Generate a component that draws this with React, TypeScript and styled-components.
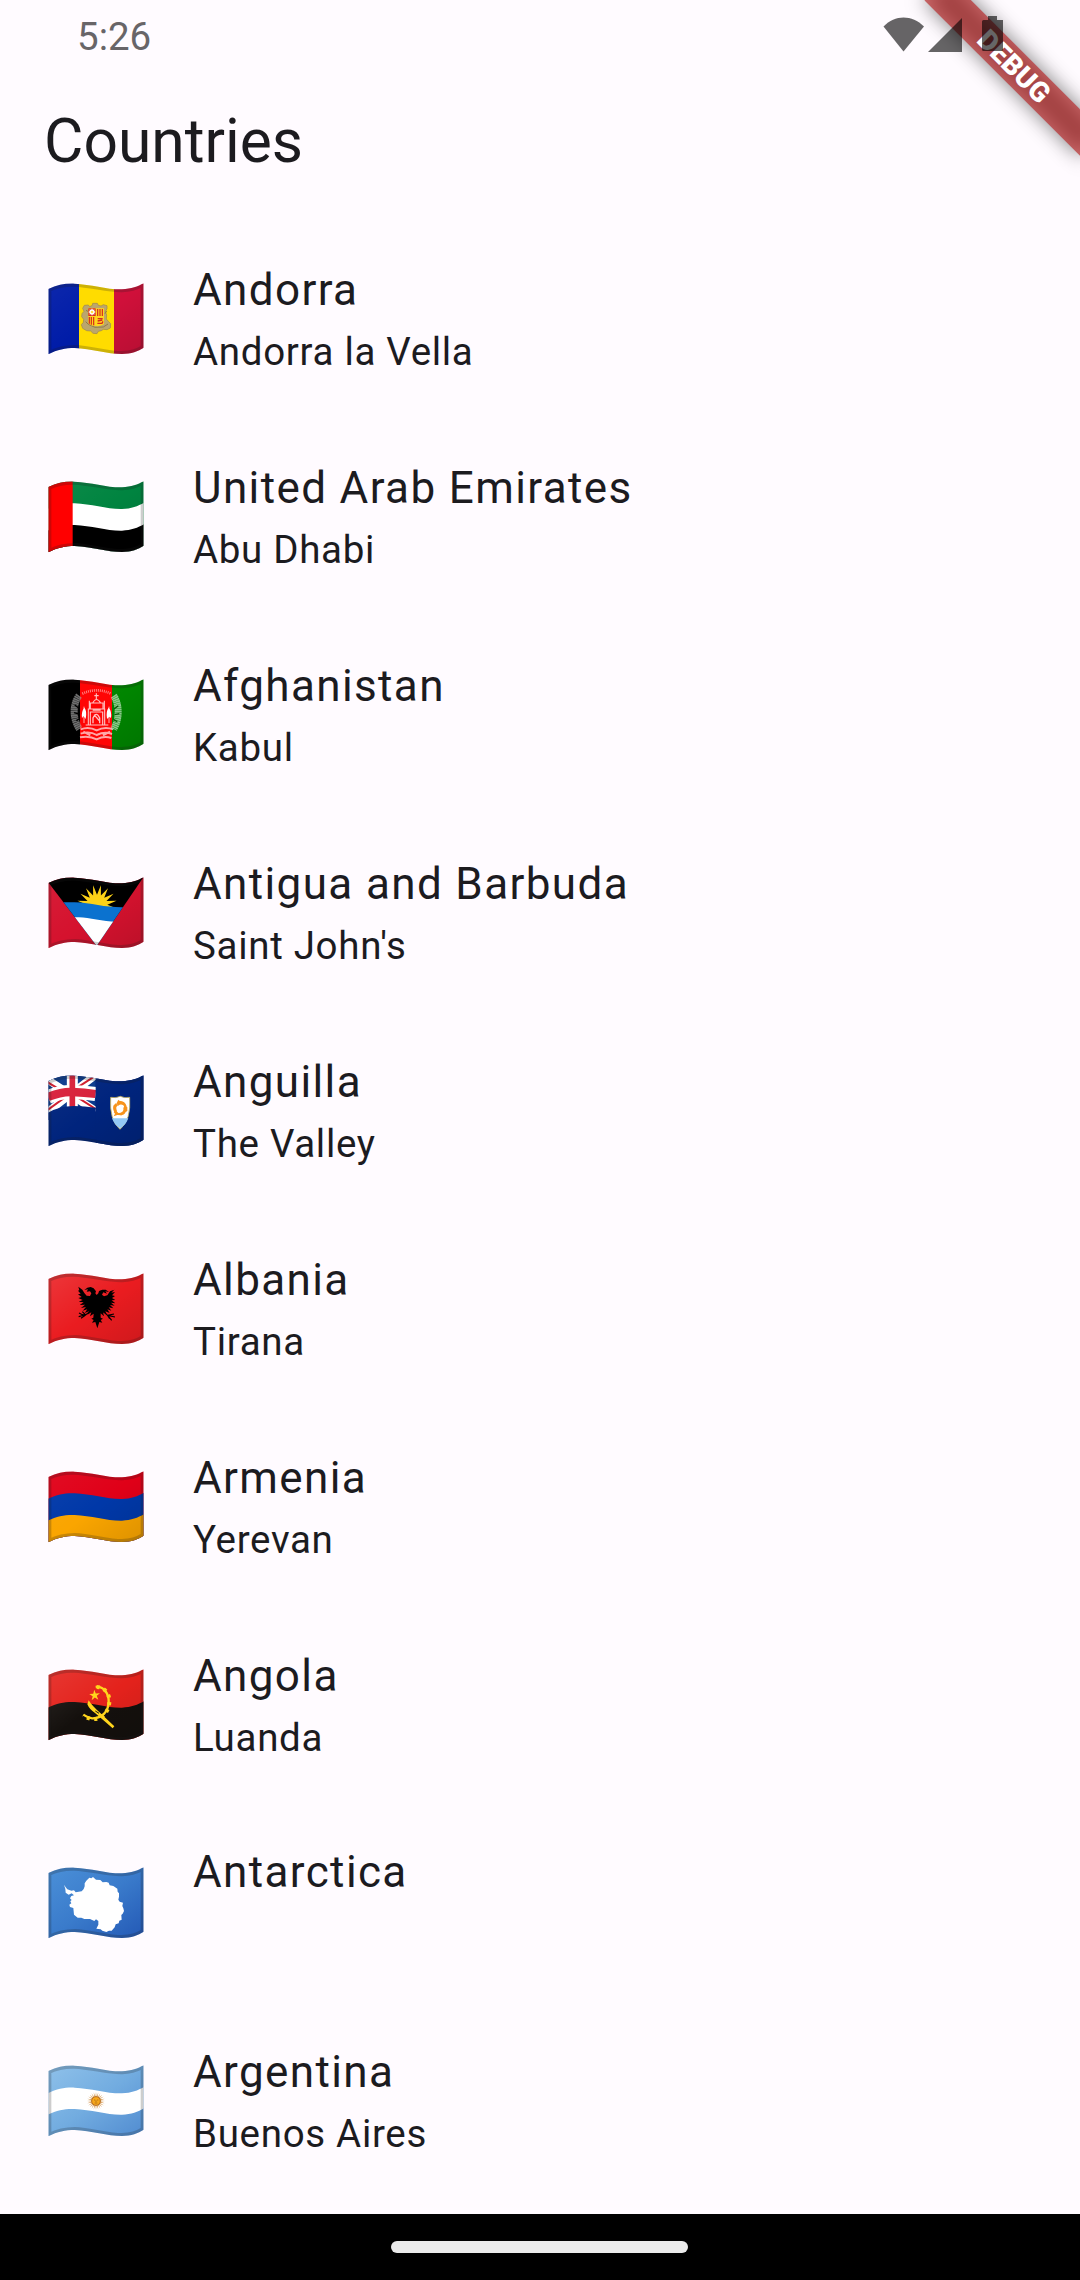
import React, { useId } from "react";
import styled, { createGlobalStyle } from "styled-components";

const GlobalStyle = createGlobalStyle`
  html, body { margin: 0; padding: 0; background: #fffbff; }
  * { box-sizing: border-box; }
`;

const Screen = styled.div`
  position: relative;
  display: flex;
  flex-direction: column;
  width: 1080px;
  height: 2280px;
  overflow: hidden;
  background: #fffbff;
  color: #1c1b1f;
  font-family: Roboto, "Noto Sans", sans-serif;
`;

const StatusBar = styled.header`
  position: relative;
  z-index: 2;
  display: flex;
  justify-content: space-between;
  align-items: flex-start;
  height: 66px;
  padding: 14px 75px 0 77px;
`;

const Clock = styled.time`
  font-size: 38.5px;
  line-height: 46px;
  color: #686568;
`;

const StatusIcons = styled.div`
  display: flex;
  svg { display: block; }
`;

const AppBar = styled.div`
  display: flex;
  align-items: center;
  height: 154px;
  padding: 0 44px 4px;
`;

const AppTitle = styled.h1`
  margin: 0;
  font-size: 60.5px;
  font-weight: 400;
  line-height: 77px;
`;

const CountryList = styled.ul`
  flex: 1;
  margin: 0;
  padding: 0;
  list-style: none;
`;

const CountryRow = styled.li`
  display: flex;
  align-items: center;
  gap: 49px;
  height: 198px;
  padding: 0 48px;
`;

const FlagSvg = styled.svg`
  display: block;
  flex: none;
  width: 96px;
  height: 72px;
`;

const RowText = styled.div<{ $lift: number }>`
  display: flex;
  flex-direction: column;
  align-self: flex-start;
  padding-top: ${(p) => 37 - p.$lift}px;
`;

const CountryName = styled.span`
  font-size: 44px;
  line-height: 66px;
  letter-spacing: 1.375px;
`;

const Capital = styled.span`
  margin-top: 1px;
  font-size: 38.5px;
  line-height: 55px;
  letter-spacing: 0.6875px;
`;

const NavBar = styled.footer`
  display: flex;
  justify-content: center;
  height: 66px;
  padding: 27px 1px 0 0;
  background: #000;
`;

const HomePill = styled.div`
  width: 297px;
  height: 12px;
  border-radius: 6px;
  background: #ebebeb;
`;

const BannerCorner = styled.div`
  position: absolute;
  top: 0;
  right: 0;
  z-index: 1;
  width: 240px;
  height: 240px;
  overflow: hidden;
`;

const Ribbon = styled.div`
  position: absolute;
  left: 64px;
  top: 49.5px;
  width: 220px;
  height: 33px;
  transform: rotate(45deg);
  &::before {
    content: "";
    position: absolute;
    inset: 0;
    background: rgba(0, 0, 0, 0.5);
    filter: blur(10px);
  }
`;

const RibbonLabel = styled.div`
  position: relative;
  display: flex;
  align-items: center;
  justify-content: center;
  height: 33px;
  background: rgba(183, 28, 28, 0.627);
  color: #fff;
  font-size: 28px;
  font-weight: 900;
  line-height: 33px;
`;

/* Upper edge of a waving flag, shifted down by d. */
const edge = (d: number) =>
  `M0,${18.5 + d} C28,${5 + d} 52,${1 + d} 80,${2 + d} C130,${4 + d} 178,${20 + d} 222,${19 + d} C250,${18 + d} 270,${10 + d} 288,${0 + d}`;
const below = (d: number) => `${edge(d)} V230 H0 Z`;
const outline =
  "M1,18 C28,5 52,1 80,2 C130,4 178,20 222,19 C250,18 270,10 287,1 V194 C270,205 250,212 222,213 C178,213 130,197 80,195 C52,195 28,200 1,214 Z";

const star = (cx: number, cy: number, outer: number, inner: number, n: number, from = -90, sweep = 360) =>
  Array.from({ length: n * 2 + (sweep < 360 ? 1 : 0) }, (_, i) => {
    const a = ((from + (sweep * i) / (n * 2)) * Math.PI) / 180;
    const r = i % 2 ? inner : outer;
    return `${(cx + r * Math.cos(a)).toFixed(1)},${(cy + r * Math.sin(a)).toFixed(1)}`;
  }).join(" ");

function Flag({ label, children }: { label: string; children: React.ReactNode }) {
  const id = "c" + useId().replace(/[^a-zA-Z0-9]/g, "");
  return (
    <FlagSvg viewBox="0 0 288 216" role="img" aria-label={label}>
      <defs>
        <clipPath id={id}>
          <path d={outline} />
        </clipPath>
      </defs>
      <g clipPath={`url(#${id})`}>
        {children}
        <path d={outline} fill="none" stroke="#1a1a1a" strokeOpacity="0.22" strokeWidth="18" />
      </g>
    </FlagSvg>
  );
}

const Shade = ({ light = 0.05 }: { light?: number }) => {
  const id = "s" + useId().replace(/[^a-zA-Z0-9]/g, "");
  return (
    <>
      <defs>
        <linearGradient id={id} x1="0" y1="0" x2="1" y2="1">
          <stop offset="0" stopColor="#fff" stopOpacity={light} />
          <stop offset="0.5" stopColor="#fff" stopOpacity="0" />
          <stop offset="0.5" stopColor="#000" stopOpacity="0" />
          <stop offset="1" stopColor="#000" stopOpacity="0.12" />
        </linearGradient>
      </defs>
      <rect width="288" height="216" fill={`url(#${id})`} />
    </>
  );
};

const Andorra = () => (
  <>
    <rect width="94" height="216" fill="#001ca8" />
    <rect x="197" width="91" height="216" fill="#d0103a" />
    <Shade />
    <rect x="93" width="105" height="216" fill="#ffdc00" />
    <path d="M109,67 l12,-1 4,5 8,-4 1,-6 14,0 3,6 8,2 7,-4 11,3 0,9 -5,9 4,10 -1,12 7,8 6,6 -1,13 -10,5 -11,-1 -6,4 -9,2 -4,7 -12,-1 -7,-7 -12,-1 -12,-7 -4,-11 6,-7 1,-9 -6,-8 1,-9 6,-7 -4,-9 Z" fill="#bba66d" stroke="#9c874e" strokeWidth="2" />
    <path d="M114,82 l9,5 M113,116 l8,8 20,9 25,-1 14,-9 M176,84 l-5,8" stroke="#8d7b4b" strokeWidth="3" fill="none" />
    <path d="M121,76 h47 v47 q-10,8 -24,6 -18,0 -23,-9 Z" fill="#ffd51d" />
    <rect x="121" y="76" width="22" height="23" fill="#d52b1e" />
    <polygon points={star(132, 87, 11, 7, 8)} fill="#fff" />
    <circle cx="132" cy="87" r="4" fill="#ffdf45" />
    <path d="M149,78 v21 M156,78 v21 M163,78 v21 M124,102 v20 M130,102 v23 M137,102 v25" stroke="#d52b1e" strokeWidth="3.6" />
    <path d="M149,107 h15 M149,114 l14,-3 M148,121 h14 l3,-6" stroke="#d52b1e" strokeWidth="4" fill="none" />
  </>
);

const Emirates = () => (
  <>
    <rect width="288" height="216" fill="#008440" />
    <Shade />
    <path d={below(65)} fill="#fff" />
    <path d={below(130)} fill="#000" />
    <rect width="74" height="216" fill="#ff0000" />
  </>
);

const Afghanistan = () => (
  <>
    <rect x="192" width="96" height="216" fill="#008500" />
    <Shade />
    <rect width="96" height="216" fill="#000" />
    <rect x="96" width="96" height="216" fill="#ff0505" />
    <g fill="none" stroke="#fff">
      <path d="M93,50 C74,75 73,118 94,150" stroke="#aaa" strokeOpacity="0.65" strokeWidth="21" strokeDasharray="5 1" />
      <path d="M197,50 C214,75 216,118 197,150" strokeOpacity="0.55" strokeWidth="21" strokeDasharray="5 1" />
      <path d="M80,78 l14,10 M78,101 l15,4 M85,125 l11,-6" stroke="#000" strokeWidth="4" />
      <path d="M211,80 l-13,10 M214,104 l-14,3 M208,128 l-12,-7" stroke="#075507" strokeWidth="4" />
      <path d="M103,44 Q146,24 189,44" strokeOpacity="0.5" strokeWidth="8" strokeDasharray="3 3" />
      <path d="M98,151 q24,-10 48,3 q24,-13 50,-3 M98,164 q27,-9 48,4 q24,-12 46,-3 M96,175 q28,-6 50,6 q22,-11 44,-4 M106,158 l21,11 M186,158 l-21,11" strokeOpacity="0.65" strokeWidth="6" />
      <path d="M121,137 V90 h49 V137 M127,137 V99 h37 v38 M113,138 H181 M127,89 v-17 h38 v17 M134,72 Q145,51 158,72 M145,60 V43 M139,50 h13 M124,89 V65 M169,89 V65" strokeOpacity="0.75" strokeWidth="3.4" />
      <path d="M135,133 V117 q10,-22 20,0 v16 M138,107 l17,19 M134,93 h24" strokeOpacity="0.75" strokeWidth="4" />
      <path d="M108,132 V83 M183,132 V83" strokeWidth="2" />
    </g>
    <path d="M109,86 q9,10 4,34 l-7,-9 -4,7 q-3,-20 7,-32 M182,86 q-9,10 -5,34 l7,-7 5,4 q3,-20 -7,-31" fill="#fff" />
  </>
);

const Antigua = () => {
  const id = "t" + useId().replace(/[^a-zA-Z0-9]/g, "");
  return (
    <>
      <defs>
        <clipPath id={id}>
          <path d="M0,15 L0,-20 H300 L288,-2 L146,206 Z" />
        </clipPath>
      </defs>
      <rect width="288" height="216" fill="#d5122e" />
      <Shade />
      <g clipPath={`url(#${id})`}>
        <rect y="-20" width="300" height="236" fill="#000" />
        <polygon points={star(147, 84, 60, 31, 9, -190, 200)} fill="#fdd217" />
        <path d="M0,76 H64 C98,74 122,79 150,84 S210,92 240,90 L288,90 V216 H0 Z" fill="#0b72cf" />
        <path d="M0,121 H93 C125,122 167,135 210,134 L288,134 V216 H0 Z" fill="#fff" />
      </g>
    </>
  );
};

const Anguilla = () => (
  <>
    <rect width="288" height="216" fill="#00247d" />
    <path d="M0,0 H143 V106 Q110,99 77,95 Q35,94 0,112 Z" fill="#08388c" />
    <path d="M0,15 L143,108 M0,110 L143,0" stroke="#fff" strokeWidth="23" />
    <path d="M-4,20 L58,57 M84,64 L143,102 M0,104 L58,62 M84,40 L143,2" stroke="#cf1b2b" strokeWidth="6" />
    <path d="M73,0 V102" stroke="#fff" strokeWidth="33" />
    <path d="M0,66 Q37,50 73,51 T143,57" stroke="#fff" strokeWidth="42" fill="none" />
    <path d="M73,0 V101" stroke="#d8203a" strokeWidth="17" />
    <path d="M0,66 Q37,50 73,51 T143,57" stroke="#d8203a" strokeWidth="25" fill="none" />
    <path d="M0,113 Q35,93 77,93 Q110,94 143,98 V135 H0 Z" fill="#00247d" />
    <rect x="143" width="145" height="216" fill="#00247d" />
    <Shade />
    <path d="M188,67 Q204,70 217,64 Q229,70 245,67 Q250,135 216,163 Q183,135 188,67 Z" fill="#fff" stroke="#b8a85d" strokeWidth="2.5" />
    <path d="M192,130 H241 Q233,151 216,160 Q199,150 192,130 Z" fill="#93c9f6" />
    <g fill="#f7941d">
      <path d="M205,86 L211,74 L214,77 Q232,78 236,94 L230,97 L226,91 Q218,85 211,92 Z" />
      <path d="M230,89 L238,97 L238,108 L233,111 Q229,121 217,121 L218,113 Q228,110 226,100 Z" />
      <path d="M222,121 L208,120 L197,124 L201,116 L197,111 L205,108 L211,114 L222,113 Z" />
      <path d="M202,115 Q193,105 196,92 L203,85 L210,91 L205,96 Q204,103 207,108 Z" />
    </g>
  </>
);

const Albania = () => (
  <>
    <rect width="288" height="216" fill="#ea1c20" />
    <Shade light={0.12} />
    <g fill="#000">
      <path d="M146,66 L142,61 L144,55 L137,46 L128,42 L118,44 L109,51 L120,49 L116,56 L126,55 L130,61 L126,69 L116,68 L109,60 L103,50 L91,41 L94,52 L90,53 L98,62 L90,64 L101,72 L91,75 L104,81 L92,86 L107,88 L95,96 L111,95 L99,105 L114,102 L104,113 L118,109 L110,120 L123,115 L118,125 L130,118 L126,130 L137,122 L136,134 L130,137 L137,141 L132,149 L142,147 L148,166 L154,147 L163,149 L158,141 L165,137 L158,134 L158,121 L168,130 L165,118 L176,124 L172,115 L185,120 L178,109 L190,113 L182,103 L196,106 L186,96 L200,98 L189,89 L202,91 L191,82 L202,81 L192,75 L201,69 L192,67 L201,57 L190,59 L199,50 L186,55 L178,67 L168,70 L162,65 L166,58 L177,62 L172,55 L183,57 L173,50 L163,50 L153,54 L151,61 Z" />
      <path d="M126,115 L113,126 L103,125 L93,120 M110,126 L92,131 M112,127 L99,136 M113,126 L103,116 M166,116 L179,127 L198,123 M179,127 L201,132 M179,127 L191,142 M179,127 L185,137" fill="none" stroke="#000" strokeWidth="3.5" />
    </g>
  </>
);

const Armenia = () => (
  <>
    <rect width="288" height="216" fill="#e00018" />
    <path d={below(65)} fill="#0038a8" />
    <path d={below(130)} fill="#faa500" />
    <Shade />
  </>
);

const Angola = () => (
  <>
    <rect width="288" height="216" fill="#e4221c" />
    <path d={below(97)} fill="#14100d" />
    <Shade light={0.1} />
    <path d="M143,54 C169,50 183,77 182,99 C181,128 162,149 132,148 Q120,147 106,137" fill="none" stroke="#ffd51d" strokeWidth="7" />
    <path d="M146,54 C171,54 186,77 184,100 C181,133 159,153 132,150 Q117,148 105,139" fill="none" stroke="#ffd51d" strokeWidth="12" strokeDasharray="9 13" />
    <polygon points={star(140, 79, 17, 6.5, 5, -94)} fill="#ffd51d" />
    <path d="M122,94 L118,106 Q124,121 142,133 L194,178 L199,172 L157,132 Q133,112 122,94" fill="#ffd51d" />
    <path d="M142,126 l11,7" stroke="#14100d" strokeWidth="3" />
  </>
);

const Antarctica = () => (
  <>
    <defs>
      <linearGradient id="antarcticSea" x1="0" y1="0" x2="1" y2="1">
        <stop offset="0" stopColor="#4b90d8" />
        <stop offset="0.5" stopColor="#3a7bcb" />
        <stop offset="1" stopColor="#2358b5" />
      </linearGradient>
    </defs>
    <rect width="288" height="216" fill="url(#antarcticSea)" />
    <path transform="translate(-54 -51)" fill="#fff" d="M102,104 L107,112 L112,118 L124,122 L132,121 L137,127 L155,124 L161,117 L164,109 L164,100 L169,92 L178,83 L184,85 L189,81 L198,89 L211,90 L218,97 L229,96 L236,98 L239,106 L250,108 L262,116 L263,125 L267,130 L267,140 L265,149 L269,155 L279,158 L277,168 L280,175 L282,183 L278,191 L274,195 L275,209 L268,212 L266,220 L257,223 L254,232 L245,242 L237,242 L229,246 L217,242 L212,238 L199,236 L205,224 L205,213 L198,208 L193,213 L180,207 L163,207 L154,203 L143,203 L132,194 L130,174 L120,171 L118,164 L124,160 L121,154 L125,150 L120,145 L124,138 L132,136 L125,130 L116,134 L107,128 L106,117 Z" />
  </>
);

const Argentina = () => (
  <>
    <defs>
      <linearGradient id="argentineSky" x1="0" y1="0" x2="1" y2="1">
        <stop offset="0" stopColor="#8fc1ea" />
        <stop offset="0.5" stopColor="#72ace0" />
        <stop offset="1" stopColor="#508bd0" />
      </linearGradient>
    </defs>
    <rect width="288" height="216" fill="url(#argentineSky)" />
    <path d={`${edge(66)} V130 C270,140 250,149 222,149 C178,150 130,134 80,132 C52,131 28,135 0,148.5 Z`} fill="#fff" />
    <polygon points={star(144, 108, 27, 13, 24)} fill="#d9a363" />
    <circle cx="144" cy="108" r="13" fill="#f7a81b" stroke="#ad641b" strokeWidth="2.5" />
    <path d="M138,105 h4 M147,105 h4 M144,106 v5 M140,114 h8" stroke="#9c5c13" strokeWidth="2" />
  </>
);

interface Country {
  name: string;
  capital: string;
  Art: () => React.JSX.Element;
}

const countries: Country[] = [
  { name: "Andorra", capital: "Andorra la Vella", Art: Andorra },
  { name: "United Arab Emirates", capital: "Abu Dhabi", Art: Emirates },
  { name: "Afghanistan", capital: "Kabul", Art: Afghanistan },
  { name: "Antigua and Barbuda", capital: "Saint John's", Art: Antigua },
  { name: "Anguilla", capital: "The Valley", Art: Anguilla },
  { name: "Albania", capital: "Tirana", Art: Albania },
  { name: "Armenia", capital: "Yerevan", Art: Armenia },
  { name: "Angola", capital: "Luanda", Art: Angola },
  { name: "Antarctica", capital: "", Art: Antarctica },
  { name: "Argentina", capital: "Buenos Aires", Art: Argentina },
];

export default function App() {
  return (
    <Screen>
      <GlobalStyle />
      <StatusBar>
        <Clock>5:26</Clock>
        <StatusIcons>
          <svg width="122" height="40" viewBox="0 0 122 40" fill="#000" fillOpacity="0.6" aria-hidden="true">
            <path d="M0.5,12.5 C12,0.5 29,0.5 41,12.5 L20.5,37.5 Z" />
            <path d="M45,38 L79,4 V38 Z" />
            <path d="M105,2 h9 v4 h6 v29.5 q0,1.5 -1.5,1.5 h-18 q-1.5,0 -1.5,-1.5 V7.5 q0,-1.5 1.5,-1.5 h4.5 Z" />
          </svg>
        </StatusIcons>
      </StatusBar>
      <BannerCorner>
        <Ribbon>
          <RibbonLabel>DEBUG</RibbonLabel>
        </Ribbon>
      </BannerCorner>
      <AppBar>
        <AppTitle>Countries</AppTitle>
      </AppBar>
      <CountryList>
        {countries.map(({ name, capital, Art }) => (
          <CountryRow key={name}>
            <Flag label={name}>
              <Art />
            </Flag>
            <RowText $lift={capital ? 0 : 2}>
              <CountryName>{name}</CountryName>
              {capital && <Capital>{capital}</Capital>}
            </RowText>
          </CountryRow>
        ))}
      </CountryList>
      <NavBar>
        <HomePill />
      </NavBar>
    </Screen>
  );
}
